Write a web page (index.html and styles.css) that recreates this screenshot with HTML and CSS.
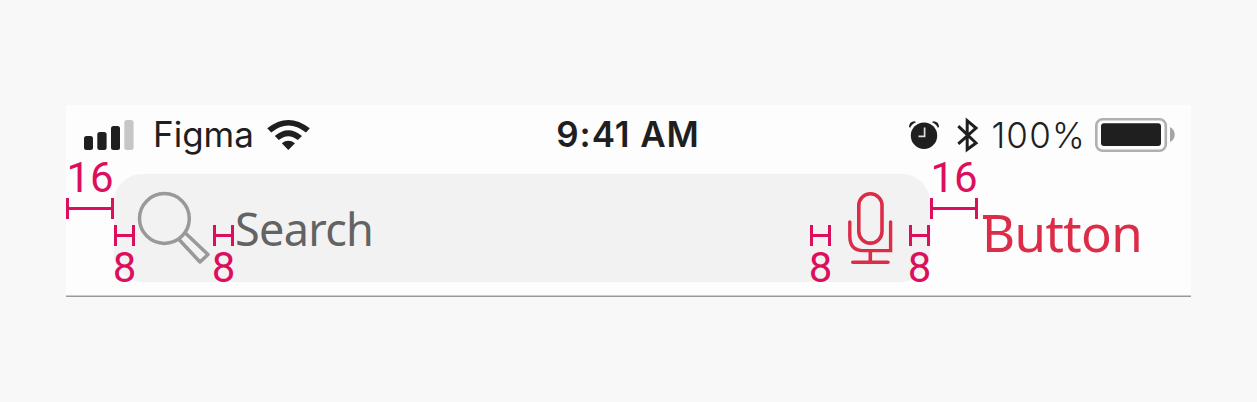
FILE: index.html
```html
<!DOCTYPE html>
<html lang="en">
<head>
<meta charset="utf-8">
<title>Search bar spacing</title>
<link rel="stylesheet" href="styles.css">
</head>
<body>
<main class="panel">
  <header class="status">
    <div class="status-left">
      <svg class="signal" width="50" height="31" viewBox="84 120 50 31"><g fill="#1f1f1f"><rect x="84" y="136" width="9" height="14" rx="2.5"/><rect x="97.3" y="132" width="9.3" height="18" rx="2.5"/><rect x="111" y="126" width="9" height="24" rx="2.5"/></g><rect x="124.3" y="120" width="9.3" height="30" rx="2.5" fill="#c6c6c6"/></svg>
      <span class="carrier">Figma</span>
      <svg class="wifi" width="44" height="32" viewBox="266 119 44 32"><path fill="#1f1f1f" d="M267.2 128.3Q288.2 111.5 309.8 128.3L306 132.6Q288.2 118.5 271.2 132.6ZM274.8 136Q288.2 124.5 302 136L297.8 140Q288.2 132.3 278.8 140ZM281.8 143.2Q288.2 138.5 295 143.2L288.3 150Z"/></svg>
    </div>
    <span class="time">9:41 AM</span>
    <div class="status-right">
      <svg width="32" height="32" viewBox="908 119 32 32"><circle cx="924" cy="135.7" r="13.2" fill="#1f1f1f"/><path d="M909 127Q909 121.5 914.8 121.2L916 122.3Q911.7 124 910.2 127.8ZM939 127Q939 121.5 933.2 121.2L932 122.3Q936.3 124 937.8 127.8Z" fill="#1f1f1f"/><path d="M924.6 127.5V136.3H918.5" fill="none" stroke="#ddd" stroke-width="1.7"/></svg>
      <svg class="bluetooth" width="22" height="36" viewBox="957 117 22 36"><path d="M958.3 126.2L976 143L967.2 149.5V120.7L976 128L958.3 143.8" fill="none" stroke="#1f1f1f" stroke-width="3" stroke-miterlimit="8"/></svg>
      <span class="percent">100%</span>
      <svg class="battery" width="81" height="36" viewBox="1095 118 81 36"><rect x="1096.3" y="120.2" width="69.5" height="31.5" rx="6.3" fill="none" stroke="#b0b0b0" stroke-width="2.6"/><rect x="1101" y="124.3" width="60" height="22.7" rx="3" fill="#1f1f1f"/><path d="M1170 128Q1174.7 130.5 1174.7 135.5T1170 143.2Z" fill="#a5a5a5"/></svg>
    </div>
  </header>
  <div class="toolbar">
    <div class="search">
      <svg class="magnifier" width="76" height="76" viewBox="136 190 76 76" fill="none" stroke="#999" stroke-width="3.5" stroke-linejoin="round"><circle cx="164.4" cy="218.5" r="24.9"/><path d="M184.8 232.5L208 254.5L200 262L178.8 239.3"/></svg>
      <span class="placeholder">Search</span>
      <svg class="mic" width="48" height="76" viewBox="847 190 48 76" fill="none" stroke="#dc2d48" stroke-width="3.6"><rect x="858.8" y="193.8" width="23.2" height="49.3" rx="11.5"/><path d="M849.8 222V236Q849.8 250.6 863 250.6H890.6V222" stroke-width="3.4" stroke-linecap="round"/><path d="M870.3 251V262M852.8 262.2H888" stroke-linecap="round"/></svg>
    </div>
    <span class="button">Button</span>
  </div>
  <div class="mark wide left16"><b>16</b><i></i></div>
  <div class="mark wide right16"><b>16</b><i></i></div>
  <div class="mark pad1"><i></i><b>8</b></div>
  <div class="mark pad2"><i></i><b>8</b></div>
  <div class="mark pad3"><i></i><b>8</b></div>
  <div class="mark pad4"><i></i><b>8</b></div>
</main>
</body>
</html>
```
FILE: styles.css
```css
* { box-sizing: border-box; }
body { margin: 0; padding: 105px 66px; height: 402px; background: #f8f8f8; overflow: hidden; }
svg { display: block; flex: none; }
.panel { position: relative; width: 1125px; height: 192px; background: #fdfdfd; border-bottom: 1px solid #999; box-shadow: inset 0 -1px #ccc; }
.status { display: grid; grid-template-columns: 1fr auto 1fr; height: 69px; padding: 0 15px 9px 18px; align-items: center; font-family: Inter, sans-serif; font-size: 35px; line-height: 42px; color: #1f1f1f; white-space: nowrap; }
.status-left, .status-right { display: flex; align-items: center; }
.status-right { justify-content: flex-end; }
.carrier { width: 102px; margin: 0 11px 2px 19px; }
.time { margin: 0 2px 0 -2px; padding-bottom: 2px; font-weight: 600; letter-spacing: .9px; }
.bluetooth { margin-left: 17px; }
.percent { margin-left: 12px; font-weight: 350; letter-spacing: 1.2px; }
.battery { margin-left: 9px; }
.toolbar { display: flex; height: 108px; }
.search { display: flex; width: 816px; height: 108px; margin-left: 48px; padding: 0 35px 0 22px; align-items: center; background: #f2f2f2; border-radius: 28px; }
.placeholder { margin: 2px 0 0 23px; font: 45px/60px "Noto Sans", sans-serif; letter-spacing: -.7px; color: #636363; }
.mic { margin-left: auto; }
.button { position: relative; margin: 23px 0 0 52px; font: 51px/70px "Noto Sans", sans-serif; letter-spacing: -.6px; color: #dc2d48; }
/* Slab at the head of the capital */
.button::before { content: ""; position: absolute; left: 1px; top: 18px; width: 6px; height: 4px; background: #dc2d48; }
.mark { position: absolute; width: 21px; color: #dc0f5e; }
.mark b { display: flex; justify-content: center; font: 42px/44px Roboto, sans-serif; }
.mark i { display: block; height: 21px; border: solid #dc0f5e; border-width: 0 3px; background: linear-gradient(#dc0f5e, #dc0f5e) center / 100% 3px no-repeat; }
.wide { top: 48px; width: 48px; }
.wide b { height: 45px; padding-top: 3px; }
.left16 { left: 0; }
.right16 { left: 864px; }
.pad1, .pad2, .pad3, .pad4 { top: 120px; }
.pad1 { left: 48px; }
.pad2 { left: 147px; }
.pad3 { left: 744px; }
.pad4 { left: 843px; }
```
